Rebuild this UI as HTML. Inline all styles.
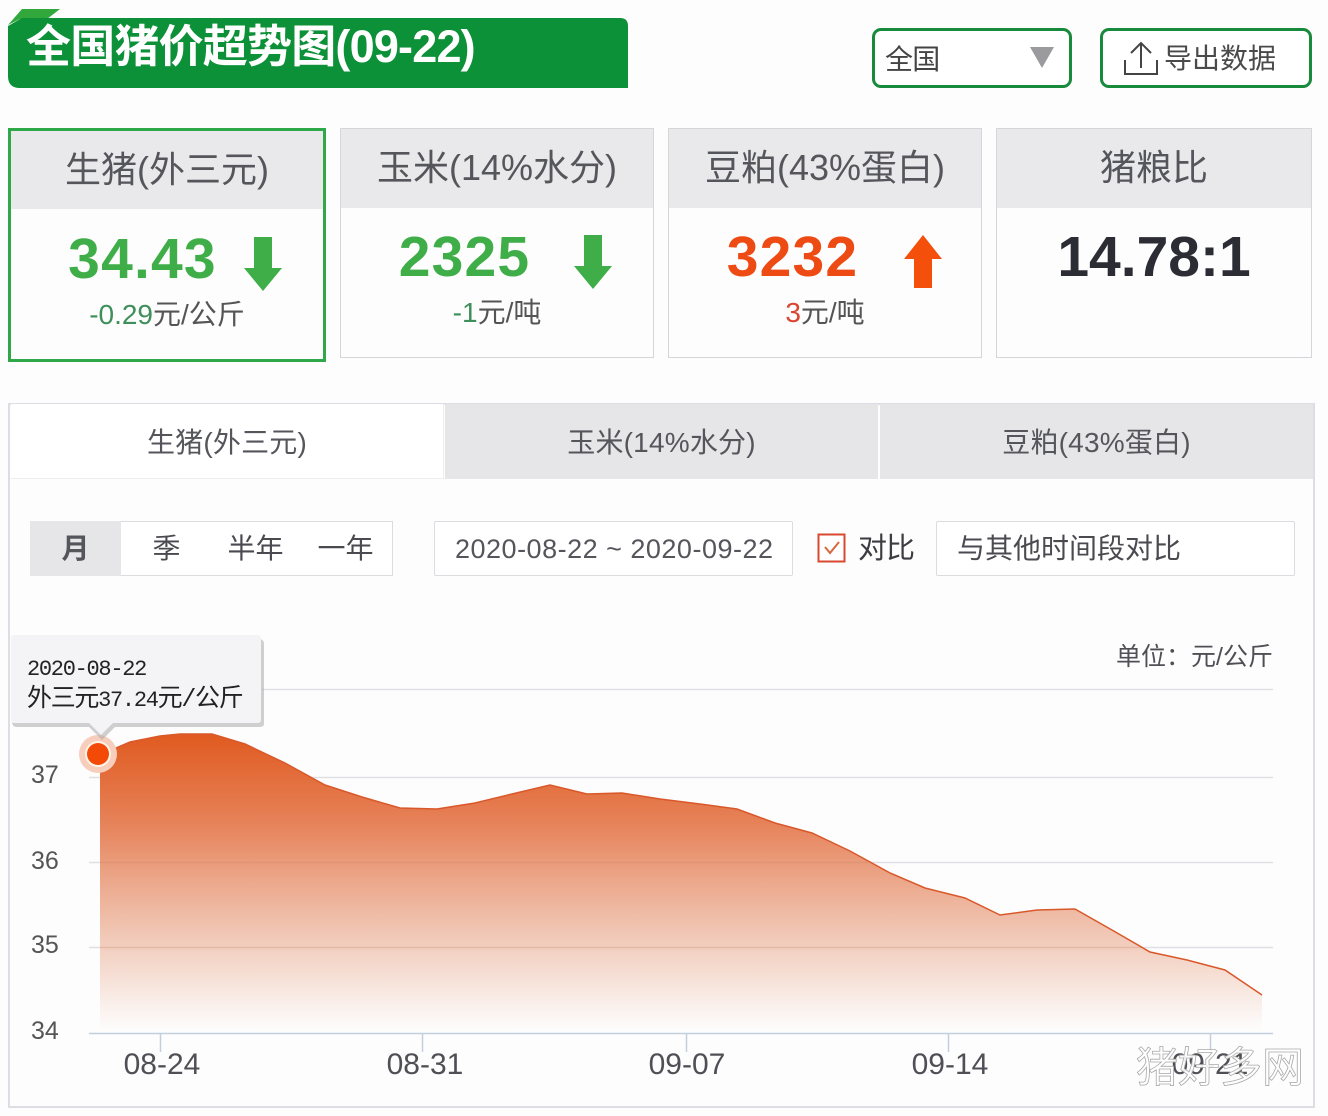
<!DOCTYPE html>
<html lang="zh"><head><meta charset="utf-8"><title>全国猪价趋势图</title>
<style>
html,body{margin:0;padding:0;background:#fdfdfe}
#p{position:relative;width:1328px;height:1116px;overflow:hidden;background:#fdfdfe;font-family:"Liberation Sans","Noto Sans CJK SC",sans-serif;color:#4a4a50}
#p div{position:absolute;box-sizing:border-box;white-space:nowrap}
.c{text-align:center}
.card{background:#fdfdfe;border:1px solid #d6d6da}
.hd{left:0;right:0;top:0;background:#e9e9eb;text-align:center;font-size:36px;letter-spacing:0;color:#55555c}
.num{font-weight:bold;font-size:57px;line-height:60px;letter-spacing:1.2px}
.sub{font-size:28px;line-height:30px;letter-spacing:0;color:#555}
.tab{top:404px;height:75px;line-height:78px;text-align:center;font-size:28px;letter-spacing:.2px;color:#55555c;background:#e6e6e8}
.yl{left:31px;font-size:25px;line-height:26px;color:#555}
.xl{font-size:30px;line-height:32px;color:#4f4f55;width:100px;text-align:center}
</style></head><body><div id="p">

<svg style="position:absolute;left:0;top:0" width="640" height="95">
<path d="M8 25 L22 9 L60 9 L47 19 L20 19 Z" fill="#32a83c"/>
<path d="M8 26 L22 18 L620 18 Q628 18 628 26 L628 88 L20 88 Q8 88 8 76 Z" fill="#0c9038"/>
</svg>
<div style="left:26px;top:18px;font-size:45px;line-height:58px;font-weight:bold;color:#fff;letter-spacing:-.8px">全国猪价超势图(09-22)</div>

<div style="left:872px;top:28px;width:200px;height:60px;border:3px solid #178a3c;border-radius:9px;background:#fff"></div>
<div style="left:885px;top:42px;font-size:28px;line-height:36px;letter-spacing:-.8px;color:#444">全国</div>
<svg style="position:absolute;left:1030px;top:47px" width="24" height="22"><path d="M0 0H24L12 21Z" fill="#9b9b9e"/></svg>

<div style="left:1100px;top:28px;width:212px;height:60px;border:3px solid #178a3c;border-radius:9px;background:#fff"></div>
<svg style="position:absolute;left:1120px;top:38px" width="40" height="40" fill="none" stroke="#444" stroke-width="2"><path d="M5 22V36H37V22M21 30V5M11 15L21 5L31 15"/></svg>
<div style="left:1164px;top:41px;font-size:28px;line-height:36px;letter-spacing:0;color:#4a4a4a">导出数据</div>

<div class="card" style="left:8px;top:128px;width:318px;height:234px;border:3px solid #2fa84a"><div class="hd" style="height:78px;line-height:77px;left:0">生猪(外三元)</div></div>
<div class="num c" style="left:30px;width:225px;top:229px;color:#3fae48">34.43</div>
<svg style="position:absolute;left:243px;top:237px" width="40" height="56"><path d="M11 0H29V31H39L20 54L1 31H11Z" fill="#3fae48"/></svg>
<div class="sub c" style="left:8px;width:318px;top:300px"><span style="color:#3f8f5a">-0.29</span>元/公斤</div>

<div class="card" style="left:340px;top:128px;width:314px;height:230px"><div class="hd" style="height:79px;line-height:77px">玉米(14%水分)</div></div>
<div class="num c" style="left:352px;width:225px;top:227px;color:#3fae48">2325</div>
<svg style="position:absolute;left:573px;top:235px" width="40" height="56"><path d="M11 0H29V31H39L20 54L1 31H11Z" fill="#3fae48"/></svg>
<div class="sub c" style="left:340px;width:314px;top:298px"><span style="color:#3f8f5a">-1</span>元/吨</div>

<div class="card" style="left:668px;top:128px;width:314px;height:230px"><div class="hd" style="height:79px;line-height:77px">豆粕(43%蛋白)</div></div>
<div class="num c" style="left:680px;width:225px;top:227px;color:#ee4a14">3232</div>
<svg style="position:absolute;left:903px;top:234px" width="40" height="56"><path d="M11 54H29V25H39L20 1L1 25H11Z" fill="#f4500c"/></svg>
<div class="sub c" style="left:668px;width:314px;top:298px"><span style="color:#d9452f">3</span>元/吨</div>

<div class="card" style="left:996px;top:128px;width:316px;height:230px"><div class="hd" style="height:79px;line-height:77px">猪粮比</div></div>
<div class="num c" style="left:996px;width:316px;top:227px;color:#2c2c34;letter-spacing:0">14.78:1</div>

<div style="left:8px;top:403px;width:1307px;height:705px;border:2px solid #dcdee4;background:#fdfdfe"></div>
<div class="tab" style="left:11px;width:433px;background:#fff;border-right:1px solid #eee;border-bottom:1px solid #eee">生猪(外三元)</div>
<div class="tab" style="left:445px;width:433px">玉米(14%水分)</div>
<div class="tab" style="left:880px;width:433px">豆粕(43%蛋白)</div>

<div style="left:30px;top:521px;width:363px;height:55px;border:1px solid #dcdce0;background:#fff"></div>
<div style="left:30px;top:521px;width:91px;height:55px;background:#e6e6e8;text-align:center;font-size:28px;line-height:55px;font-weight:bold;color:#55555c">月</div>
<div style="left:121px;top:521px;width:91px;text-align:center;font-size:28px;line-height:55px;color:#4a4a50">季</div>
<div style="left:213px;top:521px;width:85px;text-align:center;font-size:28px;line-height:55px;color:#4a4a50">半年</div>
<div style="left:303px;top:521px;width:85px;text-align:center;font-size:28px;line-height:55px;color:#4a4a50">一年</div>

<div style="left:434px;top:521px;width:359px;height:55px;border:1px solid #dcdce0;background:#fff;border-radius:2px;font-size:27px;line-height:54px;padding-left:20px;letter-spacing:.5px;color:#55555c">2020-08-22 ~ 2020-09-22</div>

<svg style="position:absolute;left:816px;top:532px" width="32" height="32" fill="none"><rect x="2.5" y="2.5" width="26" height="27" fill="#fff" stroke="#d8492e" stroke-width="2"/><path d="M9 15L14 21L23 10" stroke="#d8683e" stroke-width="2"/></svg>
<div style="left:858px;top:529px;font-size:29px;line-height:40px;letter-spacing:-1px;color:#3c3c42">对比</div>
<div style="left:936px;top:521px;width:359px;height:55px;border:1px solid #dcdce0;background:#fff;border-radius:2px;font-size:28px;line-height:54px;padding-left:20px;color:#4a4a50">与其他时间段对比</div>

<div style="left:1116px;top:641px;font-size:25px;line-height:32px;letter-spacing:0;color:#4f4f55">单位：元/公斤</div>

<svg style="position:absolute;left:0;top:0" width="1328" height="1116">
<defs><linearGradient id="g" gradientUnits="userSpaceOnUse" x1="0" y1="734" x2="0" y2="1030">
<stop offset="0" stop-color="#e05a20"/><stop offset=".3" stop-color="#e68259"/><stop offset=".55" stop-color="#edb198"/><stop offset=".75" stop-color="#f3d4c6"/><stop offset="1" stop-color="#fdfdfd"/></linearGradient></defs>
<g stroke="#dfe0e4" stroke-width="1.5">
<path d="M262 689.5H1273M89 777.5H1273M89 862.5H1273M89 947.5H1273"/></g>
<path d="M100 755L130 742L160 736L180 734L212 734L245 744L285 763L325 785L362 797L400 808L437 809L475 803L512 794L550 785L587 794L622 793L660 799L700 804L737 809L775 823L812 833L850 851L890 873L925 888L965 898L1000 915L1037 910L1075 909L1112 930L1150 952L1187 960L1225 970L1262 995V1030H100Z" fill="url(#g)"/>
<path d="M100 947.500H1142M100 862.500H868" stroke="#c8835f" stroke-opacity=".3" stroke-width="1.5"/>
<path d="M100 755L130 742L160 736L180 734L212 734L245 744L285 763L325 785L362 797L400 808L437 809L475 803L512 794L550 785L587 794L622 793L660 799L700 804L737 809L775 823L812 833L850 851L890 873L925 888L965 898L1000 915L1037 910L1075 909L1112 930L1150 952L1187 960L1225 970L1262 995" fill="none" stroke="#d9582a" stroke-width="1.5"/>
<path d="M89 1033.500H1273M160.500 1033V1052M422.500 1033V1052M686.500 1033V1052M948.500 1033V1052M1210.500 1033V1052" stroke="#c3cfdd" stroke-width="1.5" fill="none"/>
<circle cx="98" cy="754" r="19" fill="#f7cdbb"/>
<circle cx="98" cy="754" r="13" fill="#fff3e6"/>
<circle cx="98" cy="754" r="11" fill="#f44a08"/>
<path d="M14 637H258Q263 637 263 642V722Q263 725 258 725H114L101 738L88 725H16Q11 725 11 720V640Z" fill="#aaa" transform="translate(1,2)" opacity=".55"/>
<path d="M14 635H257Q261 635 261 639V720Q261 723 257 723H113L101 735L89 723H15Q11 723 11 720V639Q11 635 14 635Z" fill="#f4f4f6"/>
</svg>

<div style="left:27px;top:657px;font-size:22px;line-height:26px;color:#222;font-family:'Liberation Mono','Noto Sans CJK SC',monospace;letter-spacing:-1.3px">2020-08-22</div>
<div style="left:27px;top:685px;font-size:25px;line-height:30px;color:#222;font-family:'Liberation Mono','Noto Sans CJK SC',monospace;letter-spacing:-1.3px">外三元<span style="font-size:22px">37.24</span>元/公斤</div>

<div class="yl" style="top:762px">37</div>
<div class="yl" style="top:848px">36</div>
<div class="yl" style="top:932px">35</div>
<div class="yl" style="top:1018px">34</div>

<div class="xl" style="left:112px;top:1049px">08-24</div>
<div class="xl" style="left:375px;top:1049px">08-31</div>
<div class="xl" style="left:637px;top:1049px">09-07</div>
<div class="xl" style="left:900px;top:1049px">09-14</div>
<div class="xl" style="left:1160px;top:1049px">09-21</div>

<div style="left:1136px;top:1044px;font-size:42px;line-height:48px;color:rgba(255,255,255,.9);-webkit-text-stroke:.8px #aaa;letter-spacing:0">猪好多网</div>

</div></body></html>
